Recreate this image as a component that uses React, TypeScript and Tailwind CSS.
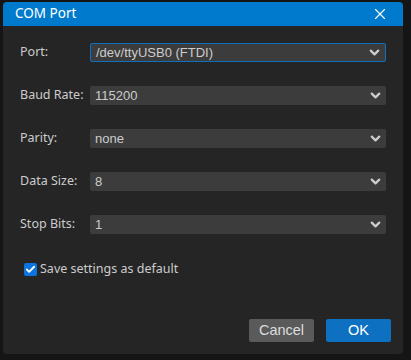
import React from 'react';
import { X, ChevronDown, Check } from 'lucide-react';

const fields = [
  { label: 'Port:', value: '/dev/ttyUSB0 (FTDI)', focused: true },
  { label: 'Baud Rate:', value: '115200' },
  { label: 'Parity:', value: 'none' },
  { label: 'Data Size:', value: '8' },
  { label: 'Stop Bits:', value: '1' },
];

const App: React.FC = () => {
  return (
    <div className="w-[411px] h-[360px] bg-[#151515] pt-[2px] pl-[3px] font-['Noto_Sans',sans-serif]">
      <div className="w-[400px] h-[352px] bg-[#252526] rounded-[4px] overflow-hidden flex flex-col">
        {/* title bar */}
        <div className="h-[24px] bg-[#007acc] flex items-center justify-between pl-[12px] pr-[14px]">
          <span className="text-[13.5px] text-white leading-none">COM Port</span>
          <X size={18} strokeWidth={1.5} className="text-white" />
        </div>

        <div className="flex flex-col gap-[24px] pt-[17px] pl-[17px] pr-[17px]">
          {fields.map((f) => (
            <div key={f.label} className="flex items-center h-[19px]">
              <span className="w-[70px] text-[12.5px] text-[#cccccc]">{f.label}</span>
              <div
                className={
                  'flex-1 h-[19px] rounded-[2px] bg-[#3c3c3c] flex items-center justify-between pl-[5px] pr-[3px] ' +
                  (f.focused ? 'border border-[#0e70c0]' : '')
                }
              >
                <span className="text-[13px] text-[#cccccc] font-['Liberation_Sans',sans-serif] leading-none">{f.value}</span>
                <ChevronDown size={15} strokeWidth={3.6} className="text-[#cccccc]" />
              </div>
            </div>
          ))}
        </div>

        <label className="flex items-center gap-[3px] mt-[26px] ml-[21px]">
          <span className="w-[13px] h-[13px] rounded-[2px] bg-[#0b74e0] flex items-center justify-center">
            <Check size={11} strokeWidth={4} className="text-white" />
          </span>
          <span className="text-[12.5px] text-[#cccccc]">Save settings as default</span>
        </label>

        <div className="flex justify-end gap-[12px] mt-auto mb-[12px] mr-[12px]">
          <button className="w-[65px] h-[23px] rounded-[2px] bg-[#5a5a5a] text-[14.5px] text-[#dddddd] font-['Liberation_Sans',sans-serif]">
            Cancel
          </button>
          <button className="w-[65px] h-[23px] rounded-[2px] bg-[#0e70c0] text-[14.5px] text-white font-['Liberation_Sans',sans-serif]">
            OK
          </button>
        </div>
      </div>
    </div>
  );
};

export default App;
